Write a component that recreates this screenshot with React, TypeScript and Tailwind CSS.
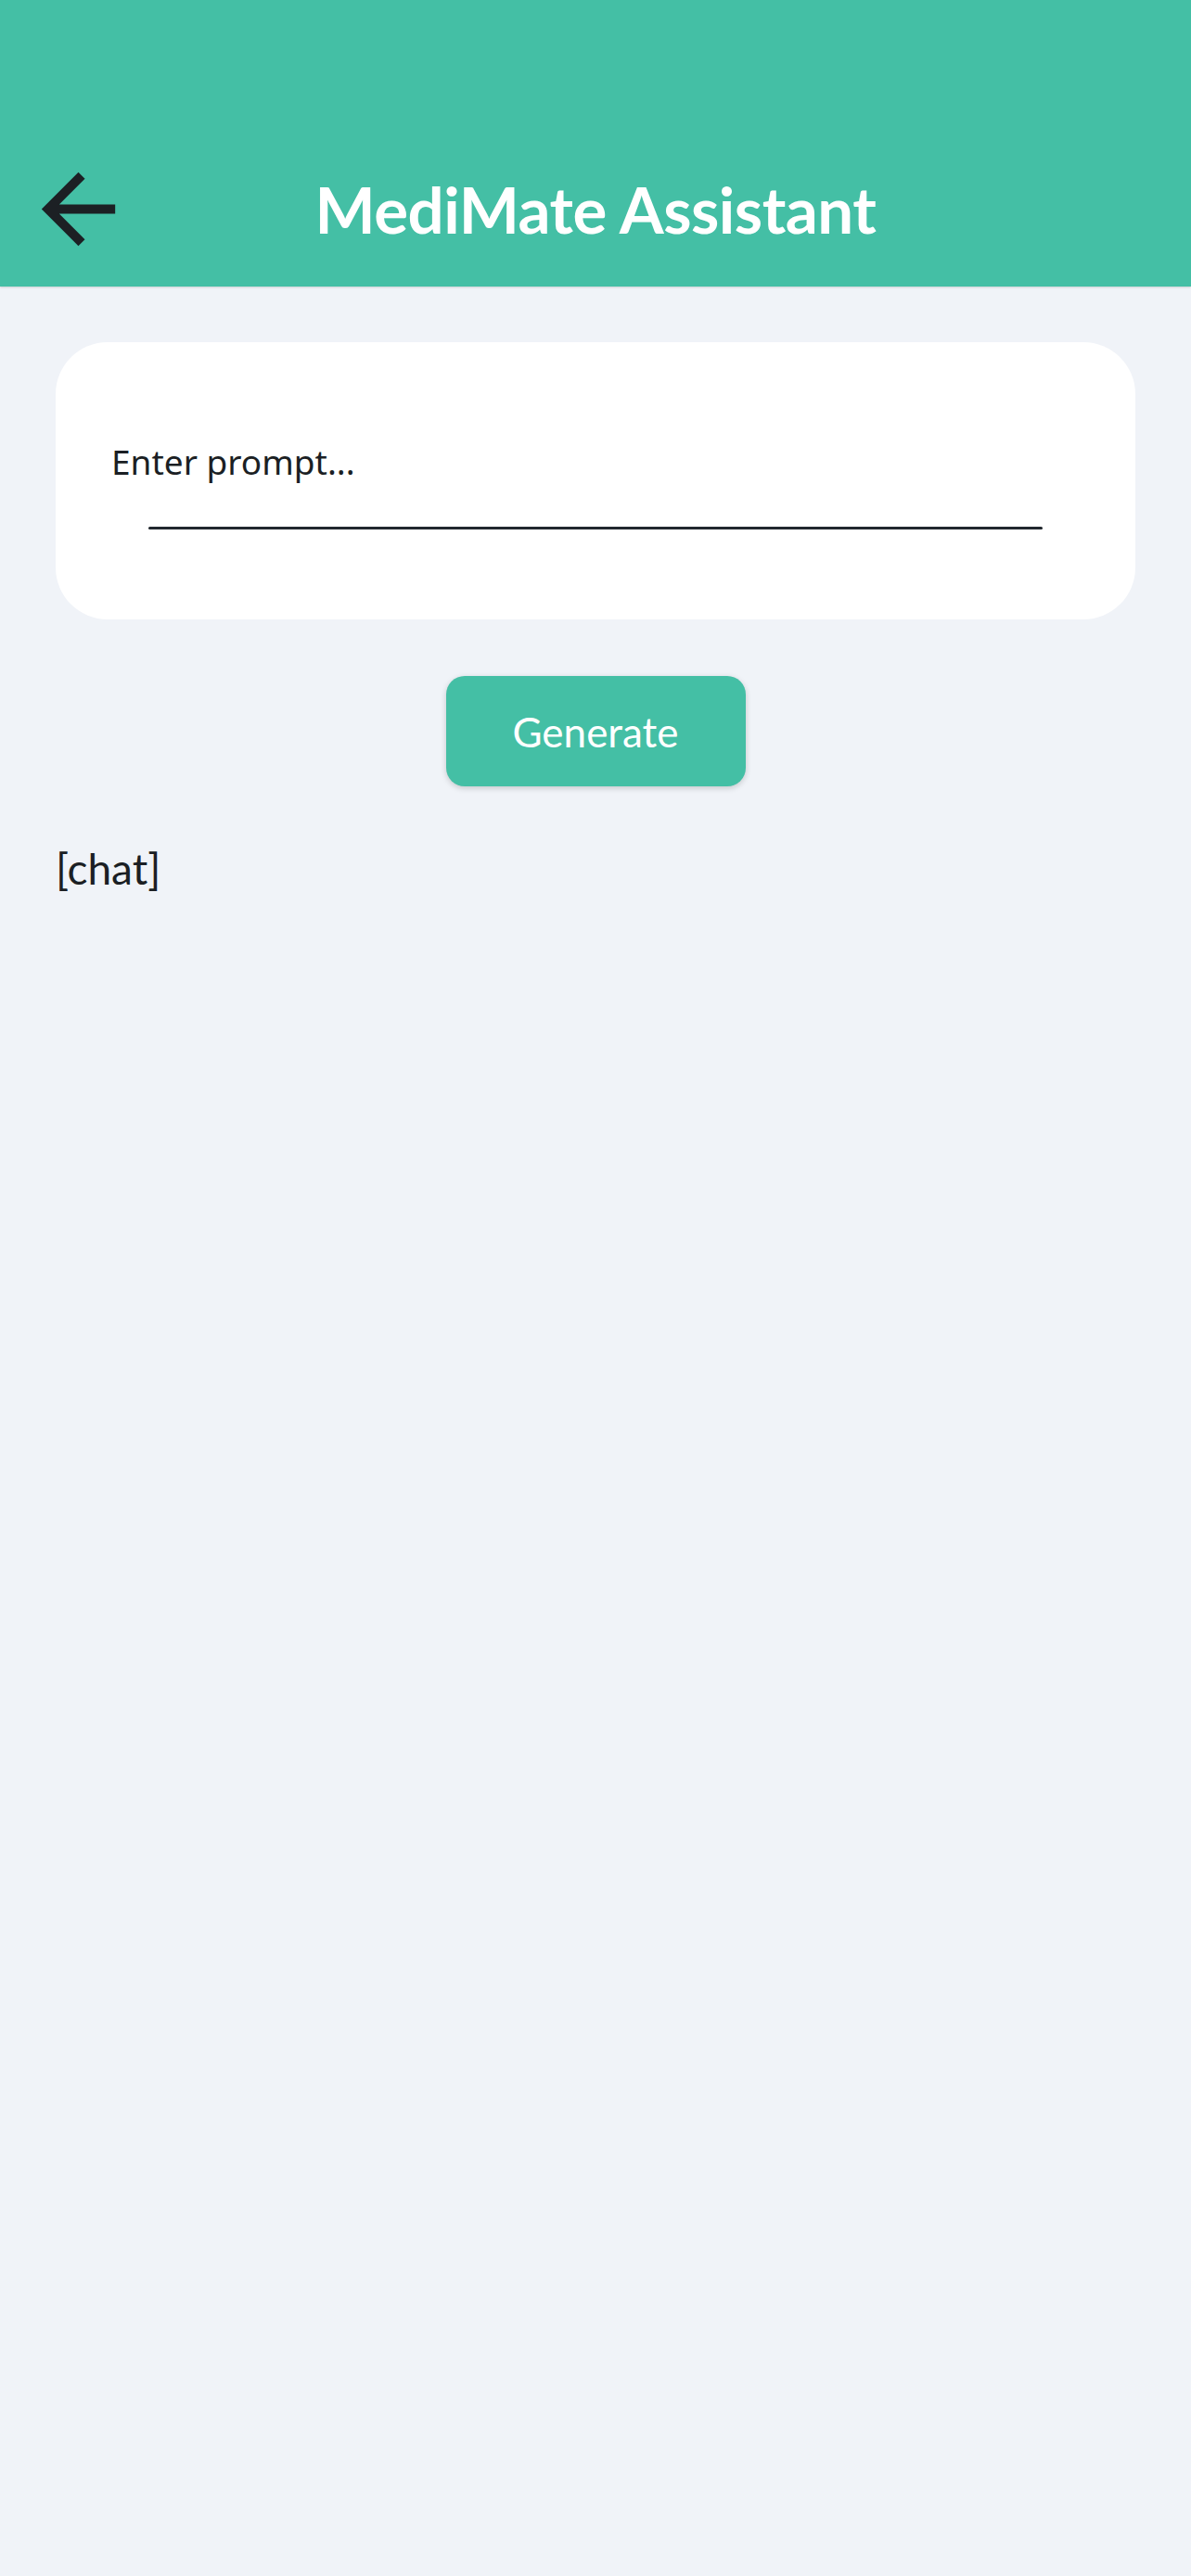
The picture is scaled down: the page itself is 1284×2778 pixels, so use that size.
export default function App() {
  return (
    <div className="min-h-[2778px] w-full bg-[#f0f3f8]" style={{ fontFamily: "Lato, 'Noto Sans', sans-serif" }}>
      <header className="h-[309px] bg-[#44bfa5] pt-[141px] shadow-[0_1px_2px_rgba(0,0,0,0.15)]">
        <div className="grid h-[168px] grid-cols-[1fr_auto_1fr] items-center">
          <div className="pl-[25px]">
            <svg width="119" height="119" viewBox="0 0 24 24" fill="#1c2024">
              <path d="M20 11H7.83l5.59-5.59L12 4l-8 8 8 8 1.41-1.41L7.83 13H20v-2z" />
            </svg>
          </div>
          <h1 className="text-[69px] font-bold leading-none tracking-[-0.5px] text-white">MediMate Assistant</h1>
          <div />
        </div>
      </header>
      <main className="px-[60px] pt-[60px]">
        <div className="flex h-[299px] flex-col rounded-[56px] bg-white px-[60px] pt-[110px]">
          <div className="text-[37px] leading-none text-[#1b1f24]" style={{ fontFamily: "'Noto Sans', sans-serif" }}>
            Enter prompt...
          </div>
          <div className="mx-[40px] mt-[52px] h-[3px] rounded-full bg-[#22282f]" />
        </div>
        <div className="flex justify-center pt-[61px]">
          <button className="flex h-[119px] w-[323px] items-center justify-center rounded-[20px] bg-[#44bfa5] text-[44px] text-white shadow-[0_2px_6px_rgba(0,0,0,0.18)]">
            Generate
          </button>
        </div>
        <div className="pt-[66px] text-[46px] leading-none text-[#1b1f24]">[chat]</div>
      </main>
    </div>
  );
}
